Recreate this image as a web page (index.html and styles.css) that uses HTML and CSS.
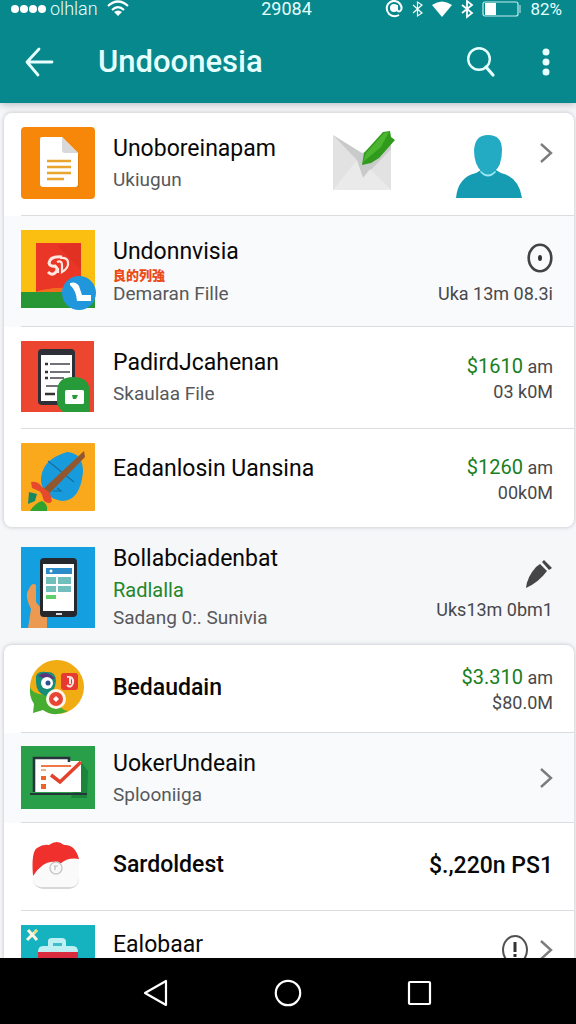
FILE: index.html
```html
<!DOCTYPE html>
<html lang="id">
<head>
<meta charset="utf-8">
<meta name="viewport" content="width=device-width, initial-scale=1">
<title>Undoonesia</title>
<link rel="stylesheet" href="styles.css">
</head>
<body>
<header class="header">
  <div class="status">
    <div class="status-left">
      <svg width="36" height="12" viewBox="0 0 36 12" fill="#fff"><circle cx="4" cy="6" r="4"/><circle cx="13" cy="6" r="4"/><circle cx="22" cy="6" r="4"/><circle cx="31" cy="6" r="4"/></svg>
      <span>olhlan</span>
      <svg class="wifi" width="22" height="18" viewBox="0 0 22 18" fill="none" stroke="#fff" stroke-width="2.2"><path d="M1 6Q11-3 21 6M5 10Q11 4 17 10"/><path d="M7 12Q11 9 15 12L11 16Z" fill="#fff" stroke="none"/></svg>
    </div>
    <span class="clock">29084</span>
    <div class="status-right">
      <svg width="18" height="18" viewBox="0 0 18 18" fill="none" stroke="#fff" stroke-width="2"><path d="M14 15Q9 18 4 14Q0 9 3 4Q7-1 13 2Q18 6 16 10Q14 13 12 10V5"/><circle cx="9" cy="8" r="3" fill="#fff"/></svg>
      <svg width="11" height="16" viewBox="0 0 11 16" fill="none" stroke="#fff" stroke-width="1.200"><path d="M1 4L10 12L5.500 15V1L10 4L1 12"/></svg>
      <svg width="20" height="16" viewBox="0 0 20 16" fill="#fff"><path d="M0 4Q10-3 20 4L10 16Z"/></svg>
      <svg width="12" height="18" viewBox="0 0 12 18" fill="none" stroke="#fff" stroke-width="1.800"><path d="M1 5L11 13L6 17V1L11 5L1 13"/></svg>
      <svg width="39" height="16" viewBox="0 0 39 16"><rect x="1" y="1" width="35" height="14" rx="2" fill="none" stroke="#c5eef0" stroke-width="1.200"/><path d="M38 4V12" stroke="#c5eef0"/><rect x="3" y="2" width="11" height="12" fill="#fff"/></svg>
      <span class="battery">82%</span>
    </div>
  </div>
  <div class="appbar">
    <button class="icon-btn" aria-label="Back"><svg width="30" height="30" viewBox="0 0 30 30" fill="none" stroke="#e6ffff" stroke-width="2.800" stroke-linecap="round" stroke-linejoin="round"><path d="M15 2L3 15L14 28M3 15H28"/></svg></button>
    <h1 class="heading">Undoonesia</h1>
    <button class="icon-btn" aria-label="Search"><svg width="30" height="32" viewBox="0 0 30 32" fill="none" stroke="#e6ffff"><circle cx="13" cy="13" r="10.800" stroke-width="2.400"/><path d="M20 21L27 29" stroke-width="3.200" stroke-linecap="round"/></svg></button>
    <button class="icon-btn more" aria-label="More options"><svg width="8" height="28" viewBox="0 0 8 28" fill="#e6ffff"><circle cx="4" cy="4" r="3.500"/><circle cx="4" cy="14" r="3.500"/><circle cx="4" cy="24" r="3.500"/></svg></button>
  </div>
</header>

<main class="content">
  <ul class="card">
    <li class="item">
      <div class="row first">
        <svg width="74" height="72" viewBox="0 0 74 72"><rect width="74" height="72" rx="4" fill="#f68708"/><path d="M20 12H43L58 28V60H22Q18 60 19 56Z" fill="#c66c07" opacity=".4"/><path d="M21 10H41L57 26V57Q57 60 54 60H22Q19 60 19 57V12Q19 10 21 10Z" fill="#fff"/><path d="M41 10L57 26H44Q41 26 41 23Z" fill="#d9d9dc"/><path d="M26 34H50M26 40H50M26 46H50M26 52H43" stroke="#e9a52c" stroke-width="2.400"/></svg>
        <div class="text"><a class="title" href="#">Unoboreinapam</a><span class="sub">Ukiugun</span></div>
        <div class="extras">
          <svg width="62" height="60" viewBox="0 0 62 60"><path d="M0 4L29 29L58 14V59H0Z" fill="#e2e2e2"/><path d="M0 4L29 22L58 10V18L30 47L23 28Z" fill="#c9caca"/><path d="M0 59L24 29L30 47L37 38L58 59Z" fill="#eaeaea"/><path d="M29 34L31 22L50 1L57 0L58 6L62 9L46 27L38 32Z" fill="#2f9a1b"/><path d="M30 31L33 22L51 2L56 1L48 16Z" fill="#4cb52f"/></svg>
          <svg class="person" width="66" height="64" viewBox="0 0 66 64"><path d="M0 63Q2 42 20 38L25 35H40L45 38Q63 42 66 63Z" fill="#159cb3"/><path d="M24 37Q32 46 40 37L37 33H27Z" fill="#9be8f1"/><path d="M18 15Q19 0 32 0Q46 0 46 15Q46 31 38 37Q32 42 26 37Q18 30 18 15Z" fill="#23abc4"/></svg>
          <button class="chevron" aria-label="Open"><svg width="13" height="20" viewBox="0 0 13 20" fill="none" stroke="#7c7c7e" stroke-width="2.400"><path d="M1 1L11 10L1 19"/></svg></button>
        </div>
      </div>
    </li>
    <li class="item tinted">
      <div class="row">
        <svg width="74" height="80" viewBox="0 0 74 80"><rect width="74" height="78" fill="#fabf10"/><rect y="62" width="74" height="16" fill="#279634"/><path d="M15 13H60V59Q36 56 15 62Z" fill="#e93626"/><path d="M36 15L60 13V40Z" fill="#d92c20" opacity=".5"/><path d="M17 61Q36 57 46 58V62H17Z" fill="#f36c1d"/><path d="M41 27Q29 26 28 33Q29 37 34 36Q38 39 34 43Q31 46 27 42" fill="none" stroke="#ffe8df" stroke-width="3"/><path d="M36 32Q41 30 41 35V42Q48 38 47 32Q46 27 39 28M37 38V43" fill="none" stroke="#ffe8df" stroke-width="2.200"/><circle cx="58" cy="63" r="17" fill="#2096dd"/><path d="M49 53Q55 51 58 56L61 65H70V71H56Q55 60 49 55Z" fill="#fff"/></svg>
        <div class="text"><a class="title" href="#">Undonnvisia</a><span class="tag">良的列強</span><span class="sub tight">Demaran Fille</span></div>
        <div class="end spaced">
          <svg width="26" height="30" viewBox="0 0 26 30"><ellipse cx="13" cy="15" rx="11.300" ry="13.300" fill="none" stroke="#434345" stroke-width="2.600"/><ellipse cx="13" cy="15" rx="2" ry="3" fill="#333"/></svg>
          <span class="meta">Uka 13m 08.3i</span>
        </div>
      </div>
    </li>
    <li class="item">
      <div class="row">
        <svg width="74" height="71" viewBox="0 0 74 71"><rect width="73" height="71" fill="#ed4630"/><rect x="17" y="8" width="37" height="56" rx="4" fill="#2f2f38"/><path d="M20 14H51V60H20Z" fill="#fff"/><path d="M29 23H49M29 31H49M29 37H43M25 45H37" stroke="#45454b" stroke-width="1.400"/><path d="M24 23H27M24 31H27M24 37H27M24 53H34" stroke="#333" stroke-width="2.600"/><path d="M36 60V51Q36 36 52 36Q69 36 69 52V71H42Q36 66 36 60Z" fill="#279a39"/><rect x="44" y="49" width="19" height="14" rx="1.500" fill="#fff"/><path d="M51 54H57L55 58H52Z" fill="#279a39"/></svg>
        <div class="text"><a class="title" href="#">PadirdJcahenan</a><span class="sub">Skaulaa File</span></div>
        <div class="end"><span class="meta"><b class="money">$1610</b> am</span><span class="meta">03 k0M</span></div>
      </div>
    </li>
    <li class="item">
      <div class="row last">
        <svg width="74" height="68" viewBox="0 0 74 68"><rect width="74" height="68" rx="1" fill="#fba91c"/><path d="M20 39Q19 17 46 9Q62 10 62 29Q59 58 41 58Q23 55 20 39Z" fill="#179bdc"/><path d="M27 18L53 39M32 48H40L36 45" fill="none" stroke="#146f9e" stroke-width="1.200"/><path d="M63 8L64 14L25 54L19 49Z" fill="#93572f"/><path d="M10 39Q17 38 21 44L29 50L31 58Q29 62 23 58L20 49L11 45Z" fill="#e64a2a"/><path d="M8 49L16 51L14 58L7 61Z" fill="#158963"/><path d="M9 68Q14 60 21 58Q27 61 26 68Z" fill="#32a22f"/></svg>
        <div class="text raised"><a class="title" href="#">Eadanlosin Uansina</a></div>
        <div class="end"><span class="meta"><b class="money">$1260</b> am</span><span class="meta">00k0M</span></div>
      </div>
    </li>
  </ul>

  <section class="loose">
    <div class="row last">
      <svg width="74" height="81" viewBox="0 0 74 81"><rect width="74" height="81" fill="#139fe0"/><path d="M7 81L10 62Q3 48 8 42Q11 35 15 38V55L26 69V81Z" fill="#ec9a52"/><rect x="19" y="11" width="37" height="59" rx="4" fill="#27282e"/><path d="M22 17H53V64H22Z" fill="#fff"/><rect x="25" y="21" width="26" height="6" fill="#2c8cc9"/><circle cx="30" cy="24" r="1.500" fill="#fff"/><path d="M25 30H35V37H25ZM37 30H50V37H37ZM25 39H35V45H25ZM37 39H50V45H37Z" fill="#71bfbd"/><rect x="25" y="48" width="10" height="4" fill="#61ce67"/><path d="M35 67H41" stroke="#ddd" stroke-width="2"/></svg>
      <div class="text"><a class="title" href="#">Bollabciadenbat</a><span class="sub green">Radlalla</span><span class="sub">Sadang 0:. Sunivia</span></div>
      <div class="end spaced">
        <button class="edit" aria-label="Edit"><svg width="28" height="29" viewBox="0 0 28 29" fill="#454548"><path d="M1 28Q2 17 11 7L15 4L22 11Q14 22 1 28Z"/><path d="M17 2L19 0L27 8L24 10Z"/></svg></button>
        <span class="meta">Uks13m 0bm1</span>
      </div>
    </div>
  </section>

  <ul class="card">
    <li class="item">
      <div class="row">
        <svg width="74" height="57" viewBox="0 0 74 57"><circle cx="36" cy="28" r="27" fill="#f1ab13"/><path d="M9 28Q12 37 32 36Q38 51 47 52Q33 59 22 51L12 54L13 45Q8 38 9 28Z" fill="#46ad31"/><path d="M15 17Q17 12 25 13Q35 12 35 22Q34 34 25 37Q15 34 15 23Z" fill="#168d79"/><path d="M17 17Q25 10 34 20L25 20Z" fill="#5c347e"/><circle cx="26" cy="24" r="6" fill="#fff"/><circle cx="27" cy="24" r="2.500" fill="#304f8e"/><rect x="40" y="14" width="17" height="17" rx="3" fill="#e53932"/><path d="M46 18Q53 17 52 24Q50 30 46 26M49 19V25" fill="none" stroke="#ffe3df" stroke-width="2"/><circle cx="35" cy="40" r="10" fill="#fff5e8"/><circle cx="35" cy="40" r="7" fill="#e74637"/><path d="M35 37L38 40L35 43L32 40Z" fill="#fff"/></svg>
        <div class="text"><a class="title strong" href="#">Bedaudain</a></div>
        <div class="end"><span class="meta"><b class="money">$3.310</b> am</span><span class="meta">$80.0M</span></div>
      </div>
    </li>
    <li class="item tinted">
      <div class="row compact">
        <svg width="74" height="63" viewBox="0 0 74 63"><rect width="74" height="63" fill="#2a9f49"/><path d="M61 17L67 25L66 52H50Z" fill="#1b853b"/><path d="M13 46V12H47L50 15H60V46Z" fill="#fff"/><path d="M13 46V12H48V16" fill="none" stroke="#27343c" stroke-width="2.600"/><path d="M20 20H50" stroke="#ef7849" stroke-width="2"/><path d="M20 24H25" stroke="#efb08c" stroke-width="2"/><path d="M20 30H25V34H20ZM20 38H25V43H20Z" fill="#ee6326"/><path d="M30 29L39 36L60 16" fill="none" stroke="#e3422c" stroke-width="3.500"/><path d="M9 47H66V49H9Z" fill="#26343b"/></svg>
        <div class="text"><a class="title" href="#">UokerUndeain</a><span class="sub">Splooniiga</span></div>
        <button class="chevron" aria-label="Open"><svg width="13" height="20" viewBox="0 0 13 20" fill="none" stroke="#7c7c7e" stroke-width="2.400"><path d="M1 1L11 10L1 19"/></svg></button>
      </div>
    </li>
    <li class="item">
      <div class="row roomy">
        <svg width="74" height="50" viewBox="0 0 74 50"><rect x="12" y="12" width="46" height="37" rx="10" fill="#d6d7da"/><path d="M12 33L33 16H58V38Q57 47 49 47H21Q13 47 12 40Z" fill="#fafafa"/><path d="M12 36Q10 12 16 8Q22 4 28 5Q36-1 43 5Q54 4 58 19Q47 17 39 24Q25 16 12 36Z" fill="#ef302c"/><circle cx="35" cy="28" r="6" fill="#f8f8f8" stroke="#cacacc" stroke-width="1.500"/><path d="M33 26H37M34 26V30" stroke="#bbb" stroke-width="1.200"/></svg>
        <div class="text"><a class="title strong" href="#">Sardoldest</a></div>
        <span class="total">$.,220n PS1</span>
      </div>
    </li>
    <li class="item">
      <div class="row last top">
        <svg width="74" height="70" viewBox="0 0 74 70"><rect width="74" height="70" fill="#15b3bf"/><path d="M7 5L16 15M16 5L6 15" stroke="#fff4df" stroke-width="3"/><path d="M13 8L16 5" stroke="#e9d76d" stroke-width="2"/><path d="M17 27Q17 21 22 21H27V16Q27 13 31 13H41Q45 13 45 17V21H52Q57 21 57 27V70H17Z" fill="#bdeff3"/><path d="M32 18H41V21H32Z" fill="#40bcca"/><path d="M17 27H57V70H17Z" fill="#d92c3e"/><path d="M26 36H46" stroke="#ffdcdc" stroke-width="3" stroke-dasharray="3 2"/></svg>
        <div class="text"><a class="title" href="#">Ealobaar</a></div>
        <div class="actions">
          <svg width="26" height="30" viewBox="0 0 26 30"><ellipse cx="13" cy="15" rx="12" ry="14" fill="none" stroke="#515153" stroke-width="2"/><path d="M13 7V17M13 19V22" stroke="#333" stroke-width="3"/></svg>
          <button class="chevron" aria-label="Open"><svg width="13" height="20" viewBox="0 0 13 20" fill="none" stroke="#7c7c7e" stroke-width="2.400"><path d="M1 1L11 10L1 19"/></svg></button>
        </div>
      </div>
    </li>
  </ul>
</main>

<nav class="navbar" aria-label="System">
  <button class="icon-btn" aria-label="Back"><svg width="28" height="28" viewBox="0 0 28 28" fill="none" stroke="#fff" stroke-width="2.200" stroke-linejoin="round"><path d="M24 2V26L3 14Z"/></svg></button>
  <button class="icon-btn" aria-label="Home"><svg width="28" height="28" viewBox="0 0 28 28" fill="none" stroke="#fff" stroke-width="2.200"><circle cx="14" cy="14" r="12.200"/></svg></button>
  <button class="icon-btn" aria-label="Recent apps"><svg width="28" height="28" viewBox="0 0 28 28" fill="none" stroke="#fff" stroke-width="2.200"><rect x="3" y="3" width="21" height="22" rx="1"/></svg></button>
</nav>
</body>
</html>
```
FILE: styles.css
```css
* { box-sizing: border-box; }

body {
  margin: 0;
  height: 100vh;
  display: flex;
  flex-direction: column;
  background: #f6f7f9;
  color: #080808;
  font-family: Roboto, "Noto Sans CJK SC", sans-serif;
}

svg { display: block; flex: none; overflow: visible; }

button {
  padding: 0;
  border: 0;
  background: none;
  cursor: pointer;
}

.header {
  flex: none;
  background: #07888c;
  color: #e6ffff;
  box-shadow: 0 1px 8px rgba(40, 60, 80, 0.35);
}

.status {
  display: grid;
  grid-template-columns: 1fr auto 1fr;
  align-items: center;
  height: 14px;
  padding: 0 14px 0 11px;
  font-size: 18px;
  line-height: 14px;
}

.status-left,
.status-right {
  display: flex;
  align-items: center;
}

.status-left { gap: 3px; font-weight: 300; }
.wifi { margin-left: 6px; }
.status-right { justify-content: flex-end; gap: 9px; }
.battery { font-size: 17px; }

.appbar {
  display: flex;
  align-items: center;
  padding: 22px 26px 16px 24px;
}

.icon-btn { display: grid; place-items: center; }
.more { margin-left: 46px; }

.heading {
  flex: 1;
  margin: 0 0 0 44px;
  font-size: 31px;
  font-weight: 500;
  line-height: 51px;
}

.content {
  flex: 1;
  min-height: 0;
  overflow: hidden;
  padding: 10px 2px 0 4px;
}

.card {
  margin: 0;
  padding: 0;
  list-style: none;
  background: #fff;
  border-radius: 8px;
  overflow: hidden;
  box-shadow: 0 0 4px rgba(60, 64, 80, 0.3);
}

.item { padding-left: 17px; }
.tinted { background: #f9fafc; }

.row {
  display: flex;
  align-items: center;
  gap: 18px;
  padding: 14px 21px 16px 0;
  border-bottom: 1px solid #dcdde0;
}

.first { padding-top: 13px; }
.compact { padding-top: 13px; padding-bottom: 13px; }
.roomy { padding-top: 17px; padding-bottom: 20px; }
.last { border-bottom: 0; }
.loose { padding-left: 17px; }
.loose .row { padding-top: 15px; padding-bottom: 13px; }

.text {
  flex: 1;
  min-width: 0;
  display: flex;
  flex-direction: column;
  white-space: nowrap;
}

.raised { padding-bottom: 16px; }

.title {
  color: inherit;
  text-decoration: none;
  font-size: 23px;
  line-height: 34px;
}

.strong { font-weight: 500; }

.sub {
  color: #58585b;
  font-size: 19px;
  line-height: 28px;
}

.tight { line-height: 22px; }
.green { color: #23862a; font-size: 20px; }

.tag {
  color: #ec4b18;
  font-size: 13px;
  font-weight: 900;
  line-height: 14px;
}

.extras {
  display: flex;
  align-items: flex-start;
  align-self: flex-start;
  padding-top: 5px;
}

.extras .person { margin: 4px 18px 0 61px; }
.extras .chevron { margin-top: 12px; }

.chevron { display: grid; place-items: center; }

.end {
  display: flex;
  flex-direction: column;
  align-items: flex-end;
  padding-top: 5px;
  white-space: nowrap;
}

.spaced { gap: 8px; padding-top: 8px; }

.meta {
  color: #48484b;
  font-size: 18px;
  line-height: 25px;
}

.money {
  color: #17801d;
  font-size: 20px;
  font-weight: 400;
}

.total { font-size: 23px; font-weight: 500; }
.top { align-items: flex-start; }
.top .text { padding-top: 3px; }
.actions { display: flex; align-items: center; gap: 12px; padding-top: 10px; }

.navbar {
  flex: none;
  height: 66px;
  display: flex;
  align-items: center;
  justify-content: center;
  gap: 104px;
  padding-top: 3px;
  background: #000;
}
```
